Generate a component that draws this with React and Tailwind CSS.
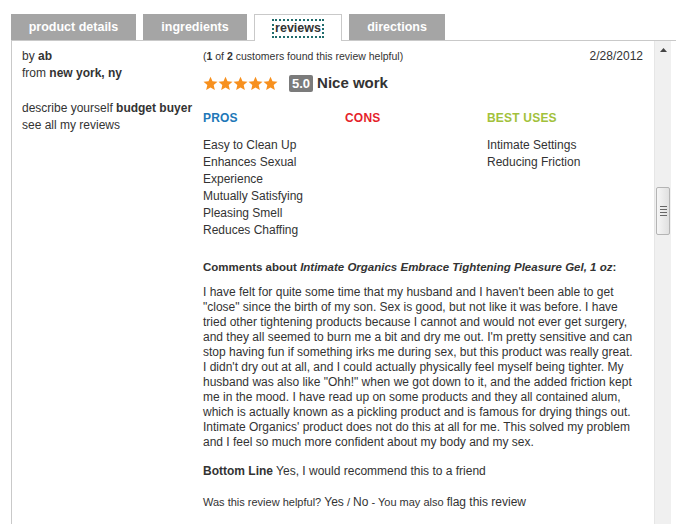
import React from 'react';

const pros = [
  'Easy to Clean Up',
  'Enhances Sexual',
  'Experience',
  'Mutually Satisfying',
  'Pleasing Smell',
  'Reduces Chaffing',
];

const bestUses = ['Intimate Settings', 'Reducing Friction'];

const commentLines = [
  "I have felt for quite some time that my husband and I haven't been able to get",
  '"close" since the birth of my son. Sex is good, but not like it was before. I have',
  'tried other tightening products because I cannot and would not ever get surgery,',
  "and they all seemed to burn me a bit and dry me out. I'm pretty sensitive and can",
  'stop having fun if something irks me during sex, but this product was really great.',
  "I didn't dry out at all, and I could actually physically feel myself being tighter. My",
  'husband was also like "Ohh!" when we got down to it, and the added friction kept',
  'me in the mood. I have read up on some products and they all contained alum,',
  'which is actually known as a pickling product and is famous for drying things out.',
  "Intimate Organics' product does not do this at all for me. This solved my problem",
  'and I feel so much more confident about my body and my sex.',
];

function Star() {
  return (
    <svg width="15" height="15" viewBox="0 0 24 24">
      <polygon
        points="12,1 15.2,8.4 23.2,9.1 17.1,14.4 18.9,22.4 12,18.2 5.1,22.4 6.9,14.4 0.8,9.1 8.8,8.4"
        fill="#f7901e"
      />
    </svg>
  );
}

function Tab({ label, active, width }) {
  if (active) {
    return (
      <div
        className={`${width} h-[27px] bg-white border border-b-0 border-[#c9c9c9] flex items-center justify-center relative z-10`}
      >
        <span className="text-[12.5px] font-bold text-[#333] leading-[15px] px-[1px] outline-2 outline-dotted outline-[#1f6b6b]">
          {label}
        </span>
      </div>
    );
  }
  return (
    <div
      className={`${width} h-[26px] bg-[#a5a5a5] flex items-center justify-center text-white text-[12.5px] font-bold`}
    >
      {label}
    </div>
  );
}

function Scrollbar() {
  return (
    <div className="w-[17px] h-full bg-[#f0f0f0] border-l border-[#e6e6e6] flex flex-col">
      <div className="h-[17px] flex items-center justify-center">
        <svg width="7" height="4" viewBox="0 0 7 4">
          <polygon points="3.5,0 7,4 0,4" fill="#444" />
        </svg>
      </div>
      <div className="h-[129px]" />
      <div className="h-[48px] mx-[1px] border border-[#b4b4b4] rounded-[2px] bg-gradient-to-r from-[#f6f6f6] to-[#e0e0e0] flex flex-col items-center justify-center gap-[2px]">
        <div className="w-[7px] h-px bg-[#666]" />
        <div className="w-[7px] h-px bg-[#666]" />
        <div className="w-[7px] h-px bg-[#666]" />
        <div className="w-[7px] h-px bg-[#666]" />
      </div>
    </div>
  );
}

export default function App() {
  return (
    <div className="w-[676px] h-[524px] overflow-hidden bg-white pt-[14px] pl-[11px] font-['Liberation_Sans',Arial,sans-serif] text-[#333]">
      <div className="flex items-start gap-[7px] h-[27px]">
        <Tab label="product details" width="w-[125px]" />
        <Tab label="ingredients" width="w-[104px]" />
        <Tab label="reviews" width="w-[88px]" active />
        <Tab label="directions" width="w-[96px]" />
      </div>

      <div className="-mt-px h-[484px] border-t border-l border-[#c9c9c9] flex">
        <div className="w-[191px] pl-[10px] pt-[7px] text-[12px] leading-[17px]">
          <div>
            by <b>ab</b>
          </div>
          <div>
            from <b>new york, ny</b>
          </div>
          <div className="mt-[18px]">
            describe yourself <b>budget buyer</b>
          </div>
          <div>see all my reviews</div>
        </div>

        <div className="w-[440px] pt-[7px]">
          <div className="flex justify-between leading-[17px]">
            <span className="text-[10.5px]">
              (<b>1</b> of <b>2</b> customers found this review helpful)
            </span>
            <span className="text-[12px]">2/28/2012</span>
          </div>

          <div className="mt-[8px] h-[20px] flex items-center">
            <div className="flex">
              <Star />
              <Star />
              <Star />
              <Star />
              <Star />
            </div>
            <span className="ml-[11px] bg-[#7b7b7b] text-white text-[13px] font-bold px-[3px] leading-[17px] rounded-[2px]">
              5.0
            </span>
            <span className="ml-[4px] text-[15px] font-bold text-[#333]">Nice work</span>
          </div>

          <div className="mt-[17px] grid grid-cols-[142px_142px_142px] text-[12px]">
            <div>
              <div className="font-bold text-[#2177b8] leading-[17px] tracking-[0.2px]">PROS</div>
              <div className="mt-[10px] leading-[17px] w-[130px]">
                {pros.map((p) => (
                  <div key={p}>{p}</div>
                ))}
              </div>
            </div>
            <div>
              <div className="font-bold text-[#e51f2b] leading-[17px] tracking-[0.2px]">CONS</div>
            </div>
            <div>
              <div className="font-bold text-[#a2c13b] leading-[17px] tracking-[0.2px]">BEST USES</div>
              <div className="mt-[10px] leading-[17px]">
                {bestUses.map((p) => (
                  <div key={p}>{p}</div>
                ))}
              </div>
            </div>
          </div>

          <div className="mt-[20px] text-[11.5px] font-bold leading-[17px]">
            Comments about <i>Intimate Organics Embrace Tightening Pleasure Gel, 1 oz</i>:
          </div>

          <div className="mt-[9px] text-[12px] leading-[15px] whitespace-nowrap">
            {commentLines.map((l, i) => (
              <div key={i}>{l}</div>
            ))}
          </div>

          <div className="mt-[13px] text-[12px] leading-[17px]">
            <b>Bottom Line</b> Yes, I would recommend this to a friend
          </div>

          <div className="mt-[14px] text-[11px] leading-[17px]">
            Was this review helpful? <span className="text-[12px]">Yes</span> /{' '}
            <span className="text-[12px]">No</span> - You may also{' '}
            <span className="text-[12px]">flag this review</span>
          </div>
        </div>

        <div className="w-[11px]" />
        <Scrollbar />
      </div>
    </div>
  );
}
